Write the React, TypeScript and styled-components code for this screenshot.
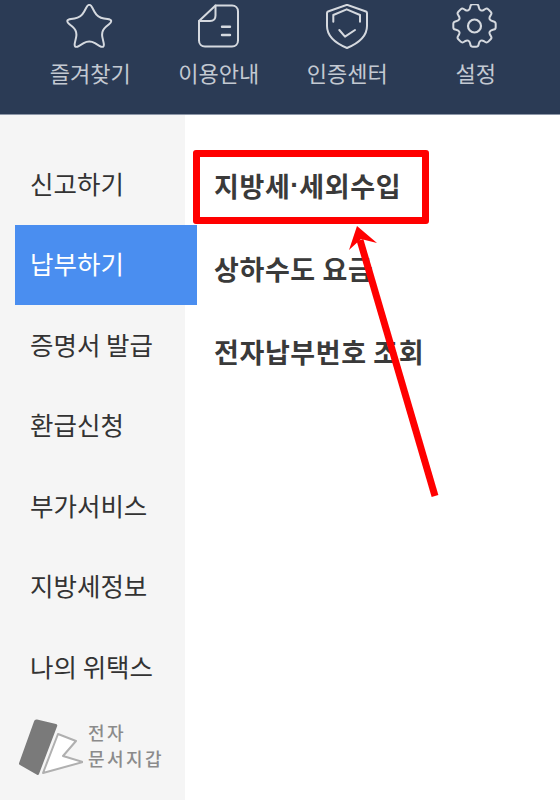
import React from 'react';
import styled, { createGlobalStyle } from 'styled-components';

const RootGlobalStyle = createGlobalStyle`
  html, body {
    margin: 0;
    padding: 0;
    background: #fff;
  }
`;

const Page = styled.div`
  position: relative;
  width: 560px;
  height: 800px;
  overflow: hidden;
  display: flex;
  flex-direction: column;
  font-family: 'Noto Sans CJK KR', 'Noto Sans', sans-serif;
`;

const TopBar = styled.header`
  flex: 0 0 115px;
  box-sizing: border-box;
  display: grid;
  grid-template-columns: repeat(4, 1fr);
  padding: 4px 21px 0 25px;
  background: #2b3b55;
  border-bottom: 1px solid #8d97a8;
`;

const TopItem = styled.div`
  display: flex;
  flex-direction: column;
  align-items: center;
  color: #c3c9d2;
  font-size: 22px;
  line-height: 30px;
`;

const TopLabel = styled.span`
  margin-left: 2px;
`;

const IconWrap = styled.span`
  display: block;
  width: 48px;
  height: 48px;
  margin-bottom: 5px;
`;

const Body = styled.div`
  flex: 1;
  display: flex;
`;

const Sidebar = styled.nav`
  flex: 0 0 185px;
  min-width: 0;
  box-sizing: border-box;
  padding: 29px 0 0 15px;
  background: #f5f5f5;
  display: flex;
  flex-direction: column;
`;

const SideItem = styled.div<{ $active?: boolean }>`
  flex: 0 0 80.5px;
  width: 182px;
  box-sizing: border-box;
  padding: 0 0 4px 15px;
  display: flex;
  align-items: center;
  font-size: 25.5px;
  color: ${(p) => (p.$active ? '#fff' : '#333')};
  background: ${(p) => (p.$active ? '#4a8ef0' : 'transparent')};
  position: relative;
`;

const WalletLogo = styled.div`
  margin: 11px 0 0 3px;
  display: flex;
  align-items: center;
  gap: 5px;
`;

const WalletText = styled.div`
  padding-bottom: 6px;
  color: #8b8b8b;
  font-size: 18px;
  font-weight: 500;
  letter-spacing: 2.4px;
`;

const WalletLine = styled.div`
  height: 26.5px;
  line-height: 26.5px;
`;

const Main = styled.main`
  flex: 1;
  min-width: 0;
  padding: 30px 0 0 29px;
  display: flex;
  flex-direction: column;
`;

const SubItem = styled.div`
  flex: 0 0 83px;
  padding-bottom: 3px;
  box-sizing: border-box;
  display: flex;
  align-items: center;
  white-space: pre;
  font-size: 27px;
  font-weight: 700;
  letter-spacing: 0.6px;
  color: #3a3a3a;
`;

const Dot = styled.span`
  font-family: 'Liberation Sans', sans-serif;
  letter-spacing: 0;
`;

const HighlightBox = styled.div`
  position: absolute;
  left: 193px;
  top: 150px;
  width: 236px;
  height: 74px;
  box-sizing: border-box;
  border: 7px solid #ff0000;
  border-radius: 3px;
`;

const Arrow = styled.svg`
  position: absolute;
  left: 0;
  top: 0;
  pointer-events: none;
`;

const iconProps = {
  width: 48,
  height: 48,
  viewBox: '0 0 48 48',
  fill: 'none',
  stroke: '#d5d9df',
  strokeWidth: 2,
  strokeLinejoin: 'round' as const,
  strokeLinecap: 'round' as const,
};

type Point = [number, number];

// closed outline with the corners cut by a quadratic curve
const roundedPath = (points: Point[], radius: number) => {
  const toward = (from: Point, to: Point): Point => {
    const dx = to[0] - from[0];
    const dy = to[1] - from[1];
    const t = Math.min(radius / Math.hypot(dx, dy), 0.5);
    return [from[0] + dx * t, from[1] + dy * t];
  };
  return (
    points
      .map((p, i) => {
        const prev = points[(i + points.length - 1) % points.length];
        const next = points[(i + 1) % points.length];
        const a = toward(p, prev);
        const b = toward(p, next);
        return `${i === 0 ? 'M' : 'L'}${a[0].toFixed(2)} ${a[1].toFixed(2)}Q${p[0]} ${p[1]} ${b[0].toFixed(2)} ${b[1].toFixed(2)}`;
      })
      .join('') + 'Z'
  );
};

const starPoints: Point[] = [
  [24.3, -2],
  [32.5, 13.5],
  [49, 16],
  [36, 27],
  [40, 45],
  [24.3, 36],
  [8.5, 45],
  [12.5, 27],
  [-0.5, 16],
  [16, 13.5],
];

const gearPoints = (): Point[] => {
  const points: Point[] = [];
  for (let i = 0; i < 8; i++) {
    const a = (i * Math.PI) / 4 - Math.PI / 2;
    [
      [-0.3, 16.5],
      [-0.17, 21.5],
      [0.17, 21.5],
      [0.3, 16.5],
    ].forEach(([off, r]) => {
      points.push([
        +(23.5 + r * Math.cos(a + off)).toFixed(2),
        +(21.5 + r * Math.sin(a + off)).toFixed(2),
      ]);
    });
  }
  return points;
};

const StarIcon = () => (
  <svg {...iconProps}>
    <path d={roundedPath(starPoints, 6.5)} />
  </svg>
);

const DocIcon = () => (
  <svg {...iconProps}>
    <path d="M21.5 1.5H38c3.5 0 6 2.5 6 6v29c0 3.5-2.5 6-6 6H11c-3.5 0-6-2.5-6-6V17z" />
    <path d="M5 17h11c3.5 0 5.5-2 5.5-5.5V1.5" />
    <path d="M28 22.7h8M28 31h8" strokeWidth={2.4} />
  </svg>
);

const ShieldIcon = () => (
  <svg {...iconProps}>
    <path d="M25 .8L44 7.5c.7.3 1 .8 1 1.5v13c0 10-8 17-20 22C13 39 5 32 5 22V9c0-.7.3-1.2 1-1.5z" />
    <path d="M11.3 17.7V11L24.7 5.3 38 11v6.7" />
    <path d="M17.3 26l5.7 6.7L33 26" />
  </svg>
);

const GearIcon = () => (
  <svg {...iconProps}>
    <path d={roundedPath(gearPoints(), 2)} />
    <circle cx="23.5" cy="22" r="6.5" strokeWidth={2.2} />
  </svg>
);

const WalletIcon = () => (
  <svg width="65" height="58" viewBox="0 0 65 58">
    <path d="M19 .5L38 5c1 .3 1.5 1 1.2 2L21 55c-.3.9-1 1.2-2 .8L2 46c-.9-.4-1.2-1-.9-2L16 2.500c.4-1.500 1.500-2.200 3-2z" fill="#7a7a7a" />
    <path d="M40 15l18 7-13 15 20 6-40 11z" fill="#fff" stroke="#b0b0b0" strokeWidth={2} strokeLinejoin="round" />
  </svg>
);

const topItems = [
  { label: '즐겨찾기', icon: <StarIcon /> },
  { label: '이용안내', icon: <DocIcon /> },
  { label: '인증센터', icon: <ShieldIcon /> },
  { label: '설정', icon: <GearIcon /> },
];

const sideItems = ['신고하기', '납부하기', '증명서 발급', '환급신청', '부가서비스', '지방세정보', '나의 위택스'];

const App = () => {
  return (
    <Page>
      <RootGlobalStyle />
      <TopBar>
        {topItems.map((item) => (
          <TopItem key={item.label}>
            <IconWrap>{item.icon}</IconWrap>
            <TopLabel>{item.label}</TopLabel>
          </TopItem>
        ))}
      </TopBar>
      <Body>
        <Sidebar>
          {sideItems.map((label) => (
            <SideItem key={label} $active={label === '납부하기'}>
              {label}
            </SideItem>
          ))}
          <WalletLogo>
            <WalletIcon />
            <WalletText>
              <WalletLine>전자</WalletLine>
              <WalletLine>문서지갑</WalletLine>
            </WalletText>
          </WalletLogo>
        </Sidebar>
        <Main>
          <SubItem>
            지방세<Dot>·</Dot>세외수입
          </SubItem>
          <SubItem>상하수도 요금</SubItem>
          <SubItem>전자납부번호 조회</SubItem>
        </Main>
      </Body>
      <HighlightBox />
      <Arrow width="560" height="800" viewBox="0 0 560 800">
        <path d="M435 496L360 240" stroke="#ff0000" strokeWidth="7" fill="none" />
        <path d="M357 226L349 250 L361 239 L377 243z" fill="#ff0000" />
      </Arrow>
    </Page>
  );
};

export default App;
